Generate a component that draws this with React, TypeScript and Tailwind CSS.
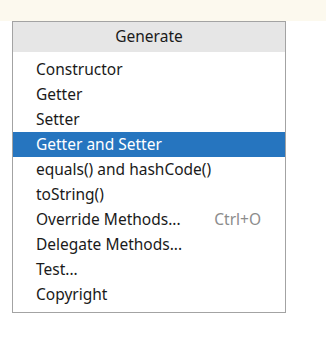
import { useState } from 'react';

const items: { label: string; shortcut?: string }[] = [
  { label: 'Constructor' },
  { label: 'Getter' },
  { label: 'Setter' },
  { label: 'Getter and Setter' },
  { label: 'equals() and hashCode()' },
  { label: 'toString()' },
  { label: 'Override Methods...', shortcut: 'Ctrl+O' },
  { label: 'Delegate Methods...' },
  { label: 'Test...' },
  { label: 'Copyright' },
];

export default function App() {
  const [active, setActive] = useState(3);

  return (
    <div className="min-h-[345px] bg-white font-['Noto_Sans',sans-serif] text-[15.5px] text-[#1a1a1a]">
      <div className="h-[21px] bg-[#fcf9ee]" />
      <div className="ml-[12px] w-[274px] border border-[#a3a3a3] bg-white">
        <div className="flex h-[30px] items-center justify-center bg-[#e6e6e6]">Generate</div>
        <ul className="py-[5px]">
          {items.map((item, i) => (
            <li
              key={item.label}
              onMouseEnter={() => setActive(i)}
              className={
                'flex h-[25px] items-center justify-between pl-[23px] pr-[24px] ' +
                (i === active ? 'bg-[#2675bf] text-white' : '')
              }
            >
              <span>{item.label}</span>
              {item.shortcut ? <span className="text-[#8c8c8c]">{item.shortcut}</span> : null}
            </li>
          ))}
        </ul>
      </div>
    </div>
  );
}
